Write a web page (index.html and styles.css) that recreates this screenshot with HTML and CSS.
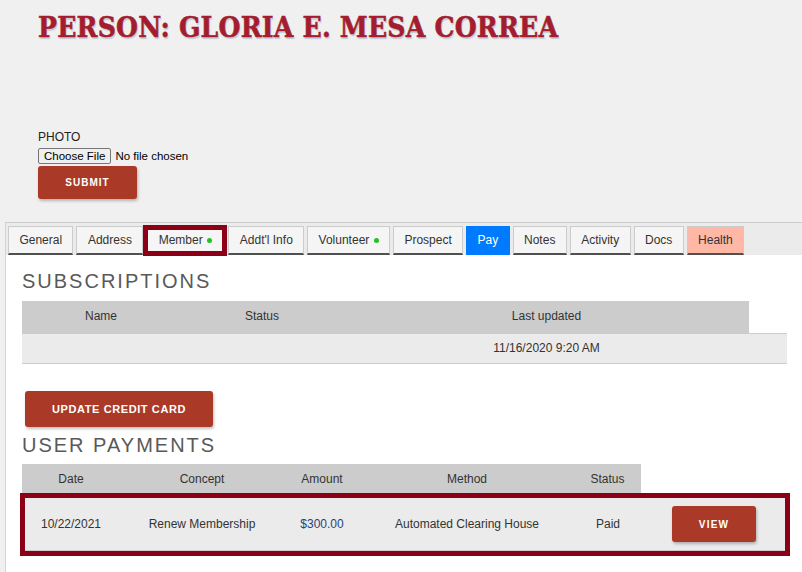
FILE: index.html
```html
<!DOCTYPE html>
<html lang="en">
<head>
  <meta charset="UTF-8">
  <title>Person: Gloria E. Mesa Correa</title>
  <link rel="stylesheet" href="styles.css">
</head>
<body>

  <div class="page-head">
    <h1 class="person-title">PERSON: GLORIA E. MESA CORREA</h1>
    <form class="photo-form">
      <label class="photo-label" for="photo">PHOTO</label>
      <input class="photo-input" type="file" id="photo">
      <button class="btn btn-submit" type="button">Submit</button>
    </form>
  </div>

  <div class="tabs-panel">
    <div class="tab-strip">
      <div class="tab">General</div>
      <div class="tab">Address</div>
      <div class="tab tab-marked">Member <span class="dot"></span></div>
      <div class="tab">Addt'l Info</div>
      <div class="tab">Volunteer <span class="dot"></span></div>
      <div class="tab">Prospect</div>
      <div class="tab tab-active">Pay</div>
      <div class="tab">Notes</div>
      <div class="tab">Activity</div>
      <div class="tab">Docs</div>
      <div class="tab tab-health">Health</div>
    </div>

    <div class="tab-content">
      <h2 class="section-title">SUBSCRIPTIONS</h2>
      <div class="sub-grid sub-head">
        <div class="cell">Name</div>
        <div class="cell">Status</div>
        <div class="cell">Last updated</div>
      </div>
      <div class="sub-grid sub-row">
        <div class="cell"></div>
        <div class="cell"></div>
        <div class="cell">11/16/2020 9:20 AM</div>
        <div class="cell"></div>
      </div>

      <button class="btn btn-card" type="button">Update credit card</button>

      <h2 class="section-title title-payments">USER PAYMENTS</h2>
      <div class="pay-head">
        <div class="cell">Date</div>
        <div class="cell">Concept</div>
        <div class="cell">Amount</div>
        <div class="cell">Method</div>
        <div class="cell">Status</div>
      </div>
      <div class="pay-row">
        <div class="pay-cells">
          <div class="cell">10/22/2021</div>
          <div class="cell">Renew Membership</div>
          <div class="cell amount">$300.00</div>
          <div class="cell">Automated Clearing House</div>
          <div class="cell">Paid</div>
          <div class="cell"><button class="btn btn-view" type="button">View</button></div>
        </div>
      </div>
    </div>
  </div>

</body>
</html>
```

FILE: styles.css
```css
body {
  margin: 0;
  background: #f0f0f0;
  font-family: "Liberation Sans", Arial, sans-serif;
  color: #333;
}
.page-head {
  padding: 11px 0 0 38px;
}
.person-title {
  margin: 0;
  font-family: "DejaVu Serif Condensed", "DejaVu Serif", serif;
  font-size: 28px;
  line-height: 34px;
  font-weight: bold;
  letter-spacing: 0.2px;
  color: #a41d2e;
  -webkit-text-stroke: 0.5px #a41d2e;
  text-shadow: 1px 2px 1px rgba(110, 130, 170, 0.35);
}
.photo-form {
  margin-top: 85px;
}
.photo-label {
  display: block;
  font-size: 12px;
  line-height: 14px;
  color: #222;
}
.photo-input {
  display: block;
  margin-top: 4px;
  height: 16px;
  font-family: "Liberation Sans", Arial, sans-serif;
  font-size: 11.5px;
  color: #000;
}
.photo-input::file-selector-button {
  font: inherit;
  height: 16px;
  padding: 0 5px;
  margin-right: 4px;
  border: 1px solid #767676;
  border-radius: 2px;
  background: #efefef;
  color: #000;
}
.btn {
  border: 0;
  border-radius: 3px;
  background: #aa3a27;
  color: #fff;
  font-family: "Liberation Sans", Arial, sans-serif;
  font-weight: bold;
  text-transform: uppercase;
  box-shadow: 1px 2px 3px rgba(0, 0, 0, 0.25);
  cursor: pointer;
}
.btn-submit {
  display: block;
  margin-top: 2px;
  width: 99px;
  height: 33px;
  font-size: 10px;
  letter-spacing: 1px;
}

/* tabs */
.tabs-panel {
  margin: 23px 0 0 5px;
  border-top: 1px solid #ccc;
  border-left: 1px solid #d4d4d4;
  background: #fff;
}
.tab-strip {
  display: flex;
  align-items: flex-start;
  gap: 3px;
  padding: 3px 0 0 2px;
  height: 29px;
  background: #ebebeb;
}
.tab {
  height: 26px;
  line-height: 26px;
  padding: 0 10.4px;
  border: 1px solid #ccc;
  border-bottom: 2px solid #505050;
  background: #f5f5f5;
  font-size: 12px;
  color: #333;
  white-space: nowrap;
}
.tab-marked {
  height: 21px;
  line-height: 21px;
  margin: -1px -2px 0 -3px;
  padding: 0 10.4px;
  border: 5px solid #8b0016;
}
.tab-active {
  background: #007bff;
  border-color: #007bff;
  color: #fff;
}
.tab-health {
  background: #ffb8a5;
}
.dot {
  display: inline-block;
  width: 5px;
  height: 5px;
  margin-left: 1px;
  border-radius: 50%;
  background: #1fc41f;
  vertical-align: 1px;
}

/* content */
.tab-content {
  padding: 14px 0 30px 16px;
  min-height: 280px;
}
.section-title {
  margin: 0 0 8px;
  font-size: 20px;
  line-height: 24px;
  font-weight: normal;
  letter-spacing: 2px;
  color: #595959;
}
.cell {
  font-size: 12px;
  text-align: center;
  color: #333;
}
.sub-grid {
  display: grid;
  grid-template-columns: 158px 164px 405px 38px;
}
.sub-head .cell {
  height: 32px;
  line-height: 30px;
  background: #ccc;
}
.sub-row {
  width: 765px;
  border-top: 1px solid #ccc;
  border-bottom: 1px solid #ccc;
  background: #ebebeb;
}
.sub-row .cell {
  height: 29px;
  line-height: 29px;
}
.btn-card {
  display: block;
  margin: 27px 0 0 3px;
  width: 188px;
  height: 36px;
  font-size: 11px;
  letter-spacing: 0.6px;
}
.title-payments {
  margin-top: 6px;
  margin-bottom: 7px;
}
.pay-head {
  display: grid;
  grid-template-columns: 98px 164px 76px 214px 67px;
}
.pay-head .cell {
  height: 29px;
  line-height: 31px;
  background: #ccc;
}
.pay-row {
  box-sizing: border-box;
  width: 770px;
  margin-left: -2px;
  border: 5px solid #8b0016;
  background: #ebebeb;
}
.pay-cells {
  display: grid;
  grid-template-columns: 92px 170px 70px 220px 62px 146px;
  align-items: center;
  height: 52px;
  border-bottom: 1px solid #ccc;
}
.amount {
  color: #2a3f7a;
}
.btn-view {
  width: 84px;
  height: 36px;
  margin-left: 4px;
  font-size: 10px;
  letter-spacing: 1.2px;
}
```
